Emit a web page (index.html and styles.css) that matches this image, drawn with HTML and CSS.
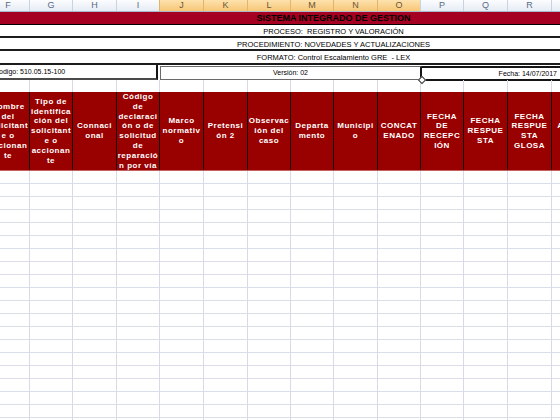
FILE: index.html
```html
<!DOCTYPE html>
<html lang="es">
<head>
<meta charset="utf-8">
<title>Control Escalamiento GRE - LEX</title>
<link rel="stylesheet" href="styles.css">
</head>
<body>
<div class="sheet">
  <div class="grid colheads">
    <div class="ch">F</div><div class="ch">G</div><div class="ch">H</div><div class="ch">I</div>
    <div class="ch sel">J</div><div class="ch sel">K</div><div class="ch sel">L</div><div class="ch sel">M</div><div class="ch sel">N</div><div class="ch sel">O</div>
    <div class="ch">P</div><div class="ch">Q</div><div class="ch">R</div><div class="ch">S</div>
  </div>

  <div class="banner title">SISTEMA INTEGRADO DE GESTION</div>
  <div class="banner line">PROCESO:&nbsp; REGISTRO Y VALORACIÓN</div>
  <div class="banner line">PROCEDIMIENTO: NOVEDADES Y ACTUALIZACIONES</div>
  <div class="banner line last">FORMATO: Control Escalamiento GRE&nbsp; - LEX</div>

  <div class="meta">
    <div class="codigo">Codigo: 510.05.15-100</div>
    <div class="version">Versión: 02<span class="handle"></span></div>
    <div class="fecha">Fecha: 14/07/2017</div>
  </div>

  <div class="grid blank">
    <div></div><div></div><div></div><div></div><div></div><div></div><div></div>
    <div></div><div></div><div></div><div></div><div></div><div></div><div></div>
  </div>

  <div class="grid head">
    <div class="hc">Nombre<br>del<br>solicitant<br>e o<br>accionan<br>te</div>
    <div class="hc">Tipo de<br>identifica<br>ción del<br>solicitant<br>e o<br>accionan<br>te</div>
    <div class="hc">Connaci<br>onal</div>
    <div class="hc">Código<br>de<br>declaraci<br>ón o de<br>solicitud<br>de<br>reparació<br>n por vía</div>
    <div class="hc">Marco<br>normativ<br>o</div>
    <div class="hc">Pretensi<br>ón 2</div>
    <div class="hc">Observac<br>ión del<br>caso</div>
    <div class="hc">Departa<br>mento</div>
    <div class="hc">Municipi<br>o</div>
    <div class="hc">CONCAT<br>ENADO</div>
    <div class="hc">FECHA<br>DE<br>RECEPC<br>IÓN</div>
    <div class="hc">FECHA<br>RESPUE<br>STA</div>
    <div class="hc">FECHA<br>RESPUE<br>STA<br>GLOSA</div>
    <div class="hc">ABOGA<br>DO</div>
  </div>

  <div class="grid body">
    <div></div><div></div><div></div><div></div><div></div><div></div><div></div>
    <div></div><div></div><div></div><div></div><div></div><div></div><div></div>
  </div>
</div>
</body>
</html>
```

FILE: styles.css
```css
html, body {
  margin: 0;
  padding: 0;
}
body {
  width: 560px;
  height: 420px;
  overflow: hidden;
  background: #ffffff;
  font-family: "Liberation Sans", Arial, sans-serif;
  color: #000;
}
.sheet {
  margin-left: -14px;
  width: 609px;
}
.grid {
  display: grid;
  grid-template-columns: 43px 43px 44px 43px 44px 44px 43px 43px 44px 43px 43px 44px 44px 44px;
}

/* column letters */
.colheads {
  height: 11px;
  border-bottom: 1px solid #a9b8cc;
}
.ch {
  border-left: 1px solid #c9d3e1;
  background: linear-gradient(#fbfcfe, #e6ecf4);
  color: #596a86;
  font-size: 9px;
  line-height: 11px;
  text-align: center;
}
.ch.sel {
  background: linear-gradient(#fde2ad, #f7c677);
  border-left-color: #e3b56a;
  color: #6a5536;
}

/* banner rows */
.banner {
  padding-left: 86px;
  text-align: center;
  white-space: nowrap;
}
.title {
  height: 12px;
  line-height: 12px;
  background: #a50021;
  border-bottom: 1px solid #000;
  font-size: 9px;
  font-weight: bold;
}
.line {
  height: 11px;
  line-height: 13px;
  font-size: 7.5px;
  border-bottom: 2px solid #1c1c1c;
}
.line.last {
  height: 12px;
  line-height: 13px;
}

/* meta row */
.meta {
  display: flex;
  height: 15px;
  font-size: 7px;
  white-space: nowrap;
}
.codigo {
  box-sizing: border-box;
  width: 172px;
  height: 15px;
  padding-left: 8px;
  line-height: 13px;
  border-right: 2px solid #151515;
  border-bottom: 2px solid #4a4a4a;
}
.version {
  position: relative;
  box-sizing: border-box;
  width: 262px;
  height: 14px;
  margin-left: 2px;
  margin-top: 1px;
  border: 1px solid #6a6a6a;
  border-right: 2px solid #151515;
  text-align: center;
  line-height: 12px;
}
.handle {
  position: absolute;
  right: -5px;
  bottom: -4px;
  width: 4px;
  height: 4px;
  border: 1px solid #333;
  background: #fff;
  transform: rotate(45deg);
}
.fecha {
  box-sizing: border-box;
  flex: 1;
  height: 15px;
  margin-top: 1px;
  border-top: 2px solid #151515;
  border-bottom: 2px solid #151515;
  text-align: right;
  padding-right: 38px;
  line-height: 11px;
}

/* blank row */
.blank {
  height: 12px;
}
.blank > div {
  border-left: 1px solid #d5dae6;
}

/* header row */
.head {
  height: 78px;
  background: #990000;
  border-bottom: 1px solid #c46262;
}
.hc {
  border-left: 1px solid #1a0000;
  display: flex;
  align-items: center;
  justify-content: center;
  text-align: center;
  white-space: nowrap;
  color: #ffffff;
  font-size: 8px;
  font-weight: bold;
  letter-spacing: 0.5px;
  line-height: 9.8px;
}

/* body grid */
.body {
  height: 249px;
  background: repeating-linear-gradient(to bottom, #ffffff 0, #ffffff 12px, #d9dee8 12px, #d9dee8 13px);
}
.body > div {
  border-left: 1px solid #d5dae6;
}
```
